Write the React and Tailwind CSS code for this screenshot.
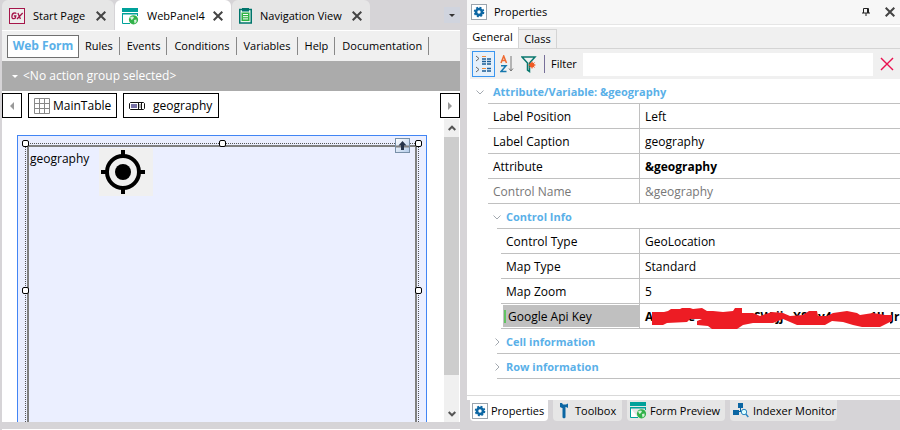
import React from "react";

const Cross = ({ className = "size-[10px] text-[#444]", w = 2 }) => (
  <svg viewBox="0 0 10 10" className={className} stroke="currentColor" strokeWidth={w} aria-hidden="true">
    <path d="M.7.7 9.3 9.3M9.3.7.7 9.3" />
  </svg>
);

const GxIcon = () => (
  <svg viewBox="0 0 16 16" className="size-4 shrink-0" aria-hidden="true">
    <rect x=".5" y=".5" width="15" height="15" fill="#eee" stroke="#a5164a" />
    <g fill="none" stroke="#a5164a" strokeWidth="1.3">
      <path d="M7.3 5.6Q6.6 4.8 5.4 5 3.2 5.200 2.900 8.200 2.800 10.700 4.700 10.700 6 10.700 6.400 9.900L6.800 8H4.900" />
      <path d="M8.900 5 11.400 11M13.700 5 8 11" />
    </g>
  </svg>
);

const WebIcon = () => (
  <svg viewBox="0 0 17 17" className="size-[17px] shrink-0" aria-hidden="true">
    <path d="M.5 6V15.500H8M15.500 6V8" fill="#fff" stroke="#00a19a" />
    <path d="M0 0H16V4H0ZM0 5H16V6.500H0Z" fill="#00a19a" />
    <circle cx="11.500" cy="11.800" r="4.600" fill="#32b24a" />
    <path d="M8 9.500 10 8.500 12 9 11 11 9.500 12ZM12 12 14.500 11.500 14.500 14 12.500 15.500Z" fill="#d8f1dc" />
  </svg>
);

const NavIcon = () => (
  <svg viewBox="0 0 13 16" className="h-4 w-[13px] shrink-0" aria-hidden="true">
    <rect x=".75" y="1.500" width="11.500" height="13.500" fill="#eafaee" stroke="#00756c" strokeWidth="1.500" />
    <path d="M3 0H10V3.500H3Z" fill="#00756c" />
    <path d="M2.500 4.500H10.500V13H2.500Z" fill="#2fb344" />
    <path d="M4 6.500H9M4 8.700H9M4 10.900H9" stroke="#fff" />
  </svg>
);

const GearIcon = () => (
  <svg viewBox="0 0 16 16" className="size-4 shrink-0" aria-hidden="true">
    <rect x=".5" y=".5" width="15" height="15" fill="#fff" stroke="#9aa4ad" />
    <circle cx="8" cy="8" r="3" fill="none" stroke="#0b66a3" strokeWidth="2.600" />
    <circle cx="8" cy="8" r="4.600" fill="none" stroke="#0b66a3" strokeWidth="1.400" strokeDasharray="2 1.613" />
  </svg>
);

const ToolIcon = () => (
  <svg viewBox="0 0 10 16" className="h-4 w-[10px] shrink-0" aria-hidden="true">
    <path d="M1 0H3L4 1.500H7L9 .5V5L7 4H6.500V14.500L5 15.500 3.500 14.500V5H3L1 4Z" fill="#0b66a3" />
  </svg>
);

const IndexerIcon = () => (
  <svg viewBox="0 0 16 15" className="h-[15px] w-4 shrink-0" aria-hidden="true">
    <path d="M5 0H10V5H5ZM0 7H6V12H0ZM7 5H8V8H7ZM6 8H9V9H6Z" fill="#0b66a3" />
    <circle cx="11" cy="9" r="2.700" fill="#dff" stroke="#2e86c1" />
    <path d="M12.800 11 15.300 14" stroke="#2e86c1" strokeWidth="1.500" />
  </svg>
);

const Chevron = ({ open, className }) => (
  <svg viewBox="0 0 8 8" className={`size-2 shrink-0 ${className}`} fill="none" stroke="#a3a9b0" aria-hidden="true">
    <path d={open ? "M.5 2.500 4 6 7.500 2.500" : "M2.500.5 6 4 2.500 7.500"} />
  </svg>
);

const docs = [
  { name: "Start Page", icon: <GxIcon />, box: "w-[112px] bg-[#e6e6e6]" },
  { name: "WebPanel4", icon: <WebIcon />, box: "w-[116px] bg-white" },
  { name: "Navigation View", icon: <NavIcon />, box: "w-[138px] bg-[#e6e6e6]" },
];

const parts = ["Rules", "Events", "Conditions", "Variables", "Help", "Documentation"];

function Editor() {
  return (
    <section className="flex min-w-0 flex-1 flex-col">
      <div className="flex h-[30px] shrink-0 items-stretch gap-px">
        {docs.map((d) => (
          <div key={d.name} className={`flex items-center justify-between rounded-t-md pr-2 pl-[7px] pt-[2px] ${d.box}`}>
            <button className="flex items-center gap-2 whitespace-nowrap">
              {d.icon}
              <span>{d.name}</span>
            </button>
            <button aria-label={`Close ${d.name}`}>
              <Cross />
            </button>
          </div>
        ))}
        <button aria-label="More documents" className="mt-[7px] ml-auto flex h-4 w-4 items-center justify-center bg-[#d0d4de]">
          <span className="border-x-[3px] border-t-[3px] border-x-transparent border-t-[#333]" />
        </button>
      </div>
      <nav className="flex h-[31px] shrink-0 items-center border-t border-white bg-[#f0f0f0] pl-[5px]">
        <button className="mr-[6px] h-[23px] w-[72px] border border-[#707070] bg-white text-[12px] font-bold whitespace-nowrap text-[#5ab0e8]">
          Web Form
        </button>
        {parts.map((p) => (
          <button key={p} className="mr-[7px] h-[18px] border-r border-[#888] pr-[6px] leading-[18px]">
            {p}
          </button>
        ))}
      </nav>
      <button className="flex h-[30px] shrink-0 items-center gap-[5px] bg-[#ababab] pl-[10px] text-[12px] text-white">
        <span className="border-x-[3px] border-t-[3px] border-x-transparent border-t-white" />
        &lt;No action group selected&gt;
      </button>
      <div className="flex h-[28px] shrink-0 items-center gap-[6px] bg-white pt-[1px] text-[12px]">
        <button aria-label="Previous" className="flex h-[25px] w-5 items-center justify-center border border-black">
          <span className="border-y-[4px] border-r-[4px] border-y-transparent border-r-[#999]" />
        </button>
        <button className="flex h-[25px] w-[89px] items-center gap-[3px] border border-black pl-[5px]">
          <svg viewBox="0 0 16 16" className="size-4 shrink-0" fill="none" stroke="#888" aria-hidden="true">
            <path d="M.5.5H15.500V15.500H.5ZM5.500.5V15.500M10.500.5V15.500M.5 5.500H15.500M.5 10.500H15.500" />
          </svg>
          MainTable
        </button>
        <button className="flex h-[25px] w-24 items-center gap-2 border border-black pl-[5px]">
          <svg viewBox="0 0 16 8" className="h-2 w-4 shrink-0" aria-hidden="true">
            <path d="M1.500.5H14.500L15.500 1.500V6.500L14.500 7.500H1.500L.5 6.500V1.500Z" fill="#fff" stroke="#111" />
            <path d="M2 2H8V6H2Z" fill="#7771a5" />
            <path d="M9.500 1V7M12.500 1V7" stroke="#111" />
            <path d="M11 2V6" stroke="#777" />
          </svg>
          geography
        </button>
        <button aria-label="Next" className="ml-auto flex h-[25px] w-5 items-center justify-center border border-black">
          <span className="border-y-[4px] border-l-[4px] border-y-transparent border-l-[#999]" />
        </button>
      </div>
      <div className="flex min-h-0 flex-1 bg-white">
        <div className="flex min-w-0 flex-1 flex-col pt-4 pr-[17px] pl-[15px]">
          <div className="flex flex-1 flex-col border border-b-0 border-[#4285f4] bg-[#ebefff] px-[7px] pt-[7px]">
            <div className="relative flex flex-1 flex-col border border-b-0 border-dotted border-[#555] px-px pt-px">
              <div className="flex flex-1 items-start border-2 border-b-0 border-[#808080] pl-px text-[12px]">
                <label htmlFor="pick" className="mt-1 w-[69px]">geography</label>
                <button id="pick" aria-label="Pick location" className="mt-px bg-[#f0f0f0] px-[2px] py-[2px]">
                  <svg viewBox="0 0 50 44" className="h-11 w-[50px]" aria-hidden="true">
                    <circle cx="22" cy="22" r="16" fill="none" stroke="#000" strokeWidth="4" />
                    <circle cx="22" cy="22" r="8" />
                    <path d="M20 0H24V6H20ZM20 38H24V44H20ZM0 20H6V24H0ZM38 20H44V24H38Z" />
                  </svg>
                </button>
              </div>
              <i className="absolute -top-1 -left-1 size-[7px] rounded-[2px] border border-black bg-white" />
              <i className="absolute -top-1 left-1/2 -ml-[3px] size-[7px] rounded-[2px] border border-black bg-white" />
              <i className="absolute -top-1 -right-1 size-[7px] rounded-[2px] border border-black bg-white" />
              <i className="absolute top-[143px] -left-1 size-[7px] rounded-[2px] border border-black bg-white" />
              <i className="absolute top-[143px] -right-1 size-[7px] rounded-[2px] border border-black bg-white" />
              <button aria-label="Select parent" className="absolute -top-[6px] right-2 size-[15px] border border-[#7890a8] bg-linear-to-br from-white to-[#b5cdea]">
                <svg viewBox="0 0 13 13" aria-hidden="true">
                  <path d="M0 7.500H13" stroke="#808080" strokeWidth="2" />
                  <path d="M6.500 2 10.500 6.500H8V11H5V6.500H2.500Z" fill="#26344a" />
                </svg>
              </button>
            </div>
          </div>
        </div>
        <div className="flex w-4 shrink-0 flex-col border-r border-white bg-[#f0f0f0]">
          <button aria-label="Scroll up" className="flex h-[18px] items-center justify-center">
            <svg viewBox="0 0 8 6" className="h-[6px] w-2" fill="none" stroke="#555" strokeWidth="2" aria-hidden="true">
              <path d="M.7 5 4 1.700 7.300 5" />
            </svg>
          </button>
          <div className="flex-1 bg-[#cdcdcd]" />
          <button aria-label="Scroll down" className="flex h-[47px] items-end justify-center pb-[5px]">
            <svg viewBox="0 0 8 6" className="h-[6px] w-2" fill="none" stroke="#555" strokeWidth="2" aria-hidden="true">
              <path d="M.7 1 4 4.300 7.300 1" />
            </svg>
          </button>
        </div>
      </div>
    </section>
  );
}

const Group = ({ name, open, sub }) => (
  <tr>
    <th colSpan="2" scope="colgroup" className="h-[25px] p-0 text-left text-[11px] font-bold text-[#5ab0e8]">
      <button className={`flex w-full items-center ${sub ? "pl-[26px]" : "pl-[9px]"}`}>
        <Chevron open={open} className={sub ? "-mr-1" : "mr-1"} />
        <span className={`flex h-[25px] flex-1 items-center border-b border-[#c0c0c0] pt-[2px] ${sub ? "pl-[9px]" : "pl-[5px]"}`}>{name}</span>
      </button>
    </th>
  </tr>
);

const Row = ({ name, children, sub, tone = "" }) => (
  <tr className={tone}>
    <th scope="row" className={`h-[25px] p-0 text-left font-normal ${sub ? "pl-[34px]" : "pl-[21px]"}`}>
      <div className="flex h-[25px] items-center border-r border-b border-[#c0c0c0] pt-[2px] pl-[5px]">{name}</div>
    </th>
    <td className="p-0">
      <div className="flex h-[25px] items-center overflow-hidden border-b border-[#c0c0c0] pt-[2px] pl-[5px]">{children}</div>
    </td>
  </tr>
);

const tools = [
  { name: "Properties", icon: <GearIcon />, box: "w-[78px] bg-white pl-[2px] gap-[3px]" },
  { name: "Toolbox", icon: <ToolIcon />, box: "w-[69px] bg-[#e6e6e6] pl-[6px] gap-[6px]" },
  { name: "Form Preview", icon: <WebIcon />, box: "w-[98px] bg-[#e6e6e6] pl-[3px] gap-[3px]" },
  { name: "Indexer Monitor", icon: <IndexerIcon />, box: "w-[107px] bg-[#e6e6e6] pl-[3px] gap-1" },
];

function Properties() {
  return (
    <section className="flex min-w-0 flex-[433_433_0%] flex-col">
      <div className="flex min-h-0 flex-1 flex-col border-b border-[#d9d9d9] bg-white">
        <header className="flex h-[25px] shrink-0 items-center gap-[7px] border-b border-[#e6e6e6] bg-[#f7f7f7] pr-[5px] pl-1">
          <GearIcon />
          <h2 className="flex-1">Properties</h2>
          <button aria-label="Pin" className="mr-2">
            <svg viewBox="0 0 8 8" className="size-2" fill="none" stroke="#222" aria-hidden="true">
              <path d="M1.500 5V.5H6.500V5M5.500.5V5M0 5H8M4 5V8" />
            </svg>
          </button>
          <button aria-label="Close Properties"><Cross /></button>
        </header>
        <div className="mt-[2px] flex h-[22px] shrink-0 items-end border-b border-[#d4d4d4] bg-[#f0f0f0]">
          <button className="h-[21px] w-[52px] border-r border-[#d4d4d4] bg-white pb-[2px]">General</button>
          <button className="h-[19px] w-[38px] border-t border-r border-[#d4d4d4]">Class</button>
        </div>
        <div className="ml-[3px] flex h-[30px] shrink-0 items-center bg-[#f0f0f0] pl-[2px]">
          <button aria-label="Categorized" className="flex h-[26px] w-[23px] items-center justify-center border border-[#3a96f0] bg-[#e5f0fb]">
            <svg viewBox="0 0 17 18" className="h-[18px] w-[17px]" fill="none" aria-hidden="true">
              <path d="M1 1 4 3.500 1 6M1 12 4 14.500 1 17" stroke="#666" />
              <path d="M7 1.500H11M7 13.500H11" stroke="#f0883a" />
              <path d="M7 4H11M12 4H16M7 6.500H11M12 6.500H16M7 9H11M12 9H16M7 16H11M12 16H16M12 13.500H16" stroke="#1c5d96" strokeWidth="1.500" />
            </svg>
          </button>
          <button aria-label="Alphabetical" className="ml-[5px]">
            <svg viewBox="0 0 14 18" className="h-[18px] w-[14px]" fill="none" aria-hidden="true">
              <path d="M1 8 3.700 1 6.500 8M2 5.500H5.500" stroke="#ee6a32" strokeWidth="1.500" />
              <path d="M1 10.700H6L1 16.500H6.500" stroke="#1677ad" strokeWidth="1.500" />
              <path d="M11 1V16M9 13.500 11 16 13 13.500" stroke="#777" />
            </svg>
          </button>
          <button aria-label="Filter options" className="ml-[7px]">
            <svg viewBox="0 0 16 17" className="h-[17px] w-4" fill="none" aria-hidden="true">
              <path d="M1 1H14L8.500 7V15.500L6.500 14V7Z" stroke="#08776d" strokeWidth="1.500" />
              <circle cx="11" cy="9" r="2.500" fill="#f15a24" />
              <path d="M11 5.500V12.500M7.500 9H14.500M8.500 6.500 13.500 11.500M13.500 6.500 8.500 11.500" stroke="#f15a24" />
            </svg>
          </button>
          <span className="ml-[7px] h-[18px] border-l border-[#776f99]" />
          <label htmlFor="filter" className="ml-[6px] w-[32px]">Filter</label>
          <input id="filter" className="h-[23px] min-w-0 flex-1 bg-white px-1 outline-none" />
          <button aria-label="Clear filter" className="mr-[6px] ml-[7px]">
            <Cross w={1} className="size-[14px] text-[#e9114f]" />
          </button>
        </div>
        <table className="w-full table-fixed border-collapse text-[12px]">
          <colgroup>
            <col className="w-[173px]" />
            <col />
          </colgroup>
          <tbody>
            <Group name="Attribute/Variable: &geography" open />
            <Row name="Label Position">Left</Row>
            <Row name="Label Caption">geography</Row>
            <Row name="Attribute"><b>&amp;geography</b></Row>
            <Row name="Control Name" tone="text-[#777]">&amp;geography</Row>
            <Group name="Control Info" open sub />
            <Row name="Control Type" sub>GeoLocation</Row>
            <Row name="Map Type" sub>Standard</Row>
            <Row name="Map Zoom" sub>5</Row>
            <tr>
              <th scope="row" className="p-0 pl-[34px] text-left font-normal">
                <div className="h-[25px] border-r border-b border-[#c0c0c0] py-px pl-[2px]">
                  <div className="flex h-[22px] items-center gap-[2px] bg-[#c0c0c0] pt-px pl-px">
                    <span className="h-[13px] w-[2px] bg-[#62c462]" />
                    Google Api Key
                  </div>
                </div>
              </th>
              <td className="p-0">
                <div className="relative flex h-[25px] items-center border-b border-[#c0c0c0] pt-[2px] pl-[5px] font-bold">
                  <span className="w-[43px] shrink-0">A</span>
                  <span className="w-[26px] shrink-0">e</span>
                  <span className="w-[40px] shrink-0">GV</span>
                  <span className="w-[22px] shrink-0">SW</span>
                  <span className="w-[17px] shrink-0">jj</span>
                  <span className="w-[25px] shrink-0">X8</span>
                  <span className="w-[52px] shrink-0">y4</span>
                  <span className="w-[20px] shrink-0">1JL</span>
                  <span className="min-w-0 flex-1 overflow-hidden">Jr</span>
                  <svg viewBox="640 304 260 26" className="absolute top-0 left-0 h-[26px] w-[260px]" aria-hidden="true">
                    <path
                      d="M652 312H664L668 311 671 309H680L682 308H690L693 309 702 308 707 311H713L723 312 733 311 735 308H742V313H753L760 316 772 312 783 313 790 316 803 315 809 311H817L818 316H827L833 313 847 311 857 313 860 315 873 313 885 315H892V321L880 327H862L853 325 843 322 832 321 825 325H797L783 319 773 323H753L743 325 737 329H712L708 326 697 325V321L702 319H690L687 322 667 323 663 325H652Z"
                      fill="#ed1c24"
                    />
                  </svg>
                </div>
              </td>
            </tr>
            <Group name="Cell information" sub />
            <Group name="Row information" sub />
          </tbody>
        </table>
      </div>
      <div className="h-1 shrink-0 bg-white" />
      <div className="flex h-[30px] shrink-0 items-start gap-[5px] pl-[3px]">
        {tools.map((t) => (
          <button key={t.name} className={`flex h-[21px] items-center rounded-b-sm whitespace-nowrap ${t.box}`}>
            {t.icon}
            <span>{t.name}</span>
          </button>
        ))}
      </div>
    </section>
  );
}

export default function App() {
  return (
    <main className="flex h-screen gap-[7px] overflow-hidden bg-[#d6d4d7] pl-[2px] font-['Open_Sans','Noto_Sans',sans-serif] text-[11px] leading-4 text-black">
      <div className="flex min-w-0 flex-[458_458_0%] flex-col">
        <Editor />
        <div className="h-[7px] shrink-0" />
        <div className="h-px shrink-0 bg-white" />
      </div>
      <Properties />
    </main>
  );
}
